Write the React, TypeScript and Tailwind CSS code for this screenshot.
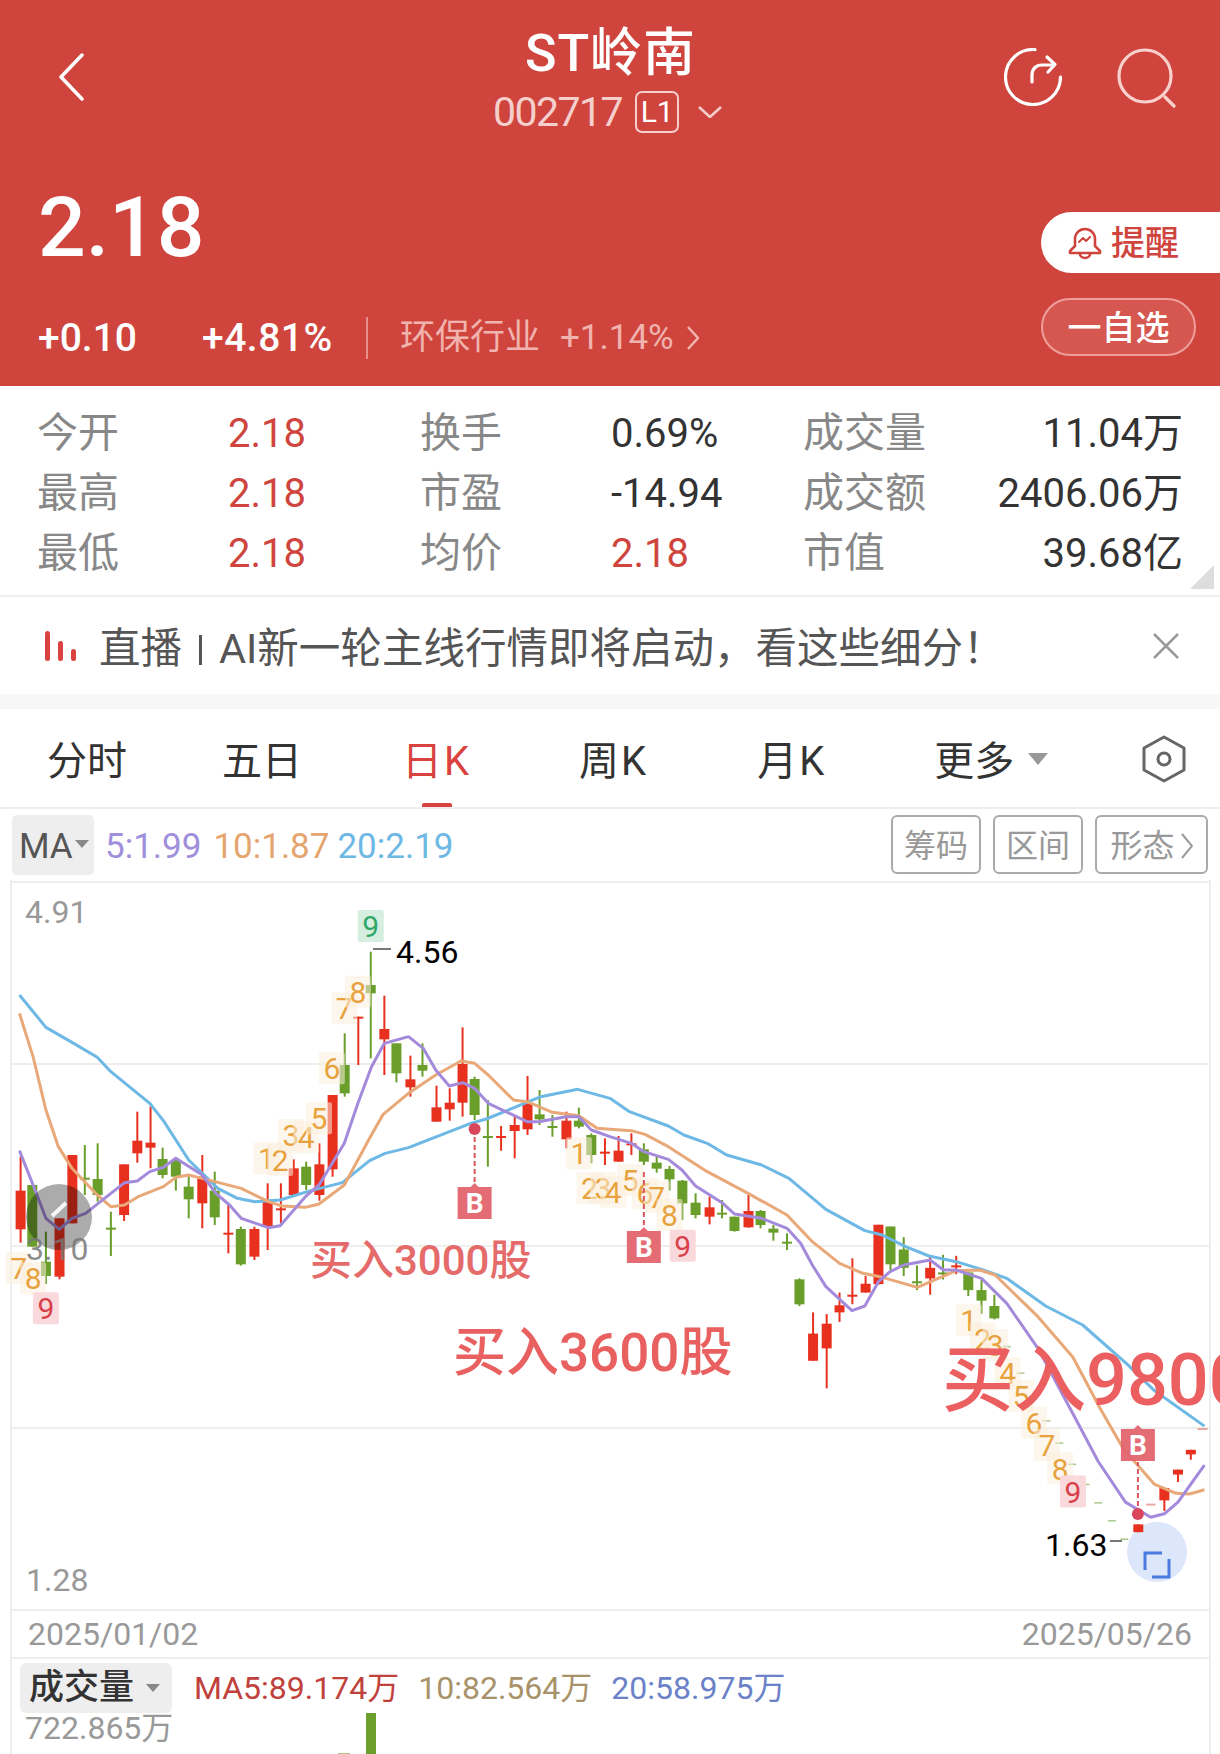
import * as React from "react";

type Candle = [number, number, number, number, number, "r" | "g"];
type Pt = [number, number];

// readings taken from crops of the chart, converted to page pixels below
const lx = (x: number) => x / 2.5705;
const rx = (x: number) => 610 + x / 2.5705;
const y4 = (y: number) => 880 + y / 3;
const y6 = (y: number) => 1200 + y / 2.83;

const leftCandles: Candle[] = [
  [53, 830, 1088, 932, 1048, "r"], [83, 915, 1100, 915, 1100, "g"], [118, 1055, 1212, 1145, 1188, "g"],
  [153, 1015, 1198, 1015, 1190, "r"], [186, 825, 1030, 825, 1030, "r"], [218, 795, 945, 893, 893, "g"],
  [251, 790, 965, 897, 945, "g"], [285, 995, 1128, 1043, 1043, "g"], [319, 853, 1023, 853, 1005, "r"],
  [353, 695, 848, 782, 820, "r"], [387, 680, 865, 788, 803, "r"], [418, 803, 895, 837, 885, "g"],
  [452, 835, 932, 840, 890, "g"], [485, 890, 1015, 920, 958, "g"], [520, 825, 1045, 890, 970, "r"],
  [552, 875, 1035, 932, 1012, "g"], [587, 975, 1120, 1058, 1058, "r"], [619, 1040, 1157, 1047, 1153, "g"],
  [654, 1040, 1140, 1047, 1130, "r"], [688, 910, 1110, 965, 1040, "r"], [722, 910, 1030, 985, 985, "r"],
  [755, 838, 945, 865, 945, "r"], [787, 845, 930, 860, 915, "g"], [821, 790, 962, 853, 945, "r"],
  [855, 645, 890, 645, 868, "r"], [886, 460, 650, 555, 640, "g"], [921, 410, 555, 410, 410, "r"],
  [953, 215, 535, 315, 340, "g"], [988, 347, 585, 447, 478, "r"], [1019, 490, 607, 490, 580, "g"],
  [1055, 527, 650, 598, 622, "r"], [1086, 490, 590, 555, 572, "g"], [1122, 617, 725, 682, 725, "r"],
  [1156, 625, 722, 668, 688, "r"], [1189, 442, 710, 552, 668, "r"], [1220, 590, 720, 597, 705, "g"],
  [1254, 660, 860, 768, 768, "g"], [1288, 738, 812, 768, 768, "r"], [1323, 710, 835, 735, 753, "r"],
  [1356, 588, 765, 672, 748, "r"], [1387, 630, 735, 703, 718, "g"], [1420, 705, 770, 738, 738, "g"],
  [1456, 695, 805, 722, 778, "r"], [1488, 683, 745, 722, 740, "g"], [1520, 760, 850, 765, 825, "g"],
  [1555, 775, 855, 815, 815, "r"],
];

const midCandles: Candle[] = [
  [22, 768, 845, 812, 845, "r"], [55, 760, 825, 790, 790, "r"], [87, 790, 855, 808, 845, "g"],
  [120, 830, 878, 848, 866, "g"], [153, 858, 932, 867, 898, "g"], [186, 900, 1020, 902, 970, "g"],
  [220, 940, 1015, 968, 1005, "g"], [256, 950, 1033, 982, 1010, "r"], [288, 960, 1015, 998, 998, "g"],
  [320, 1010, 1055, 1010, 1053, "g"], [356, 945, 1043, 993, 1042, "r"], [387, 990, 1045, 993, 1035, "g"],
  [420, 1035, 1082, 1046, 1058, "g"], [455, 1060, 1110, 1085, 1085, "g"], [487, 1195, 1278, 1198, 1273, "g"],
];

const lowCandles: Candle[] = [
  [522, 318, 455, 378, 455, "r"], [557, 323, 533, 350, 420, "r"], [590, 262, 345, 298, 318, "r"],
  [623, 165, 295, 268, 268, "r"], [657, 215, 262, 237, 262, "r"], [690, 70, 240, 70, 238, "r"],
  [721, 75, 198, 75, 182, "g"], [755, 105, 215, 140, 192, "g"], [789, 185, 255, 230, 230, "g"],
  [823, 160, 268, 192, 222, "r"], [856, 155, 225, 205, 205, "g"], [890, 158, 210, 185, 185, "r"],
  [921, 205, 272, 205, 255, "g"], [955, 225, 322, 255, 285, "g"], [988, 268, 338, 300, 335, "g"],
  [1358, 918, 940, 918, 940, "r"], [1425, 815, 880, 815, 850, "r"], [1460, 763, 798, 763, 777, "r"],
  [1493, 707, 735, 707, 720, "r"],
];

const candles: Candle[] = [
  ...leftCandles.map((c): Candle => [lx(c[0]), y4(c[1]), y4(c[2]), y4(c[3]), y4(c[4]), c[5]]),
  ...midCandles.map((c): Candle => [rx(c[0]), y4(c[1]), y4(c[2]), y4(c[3]), y4(c[4]), c[5]]),
  ...lowCandles.map((c): Candle => [rx(c[0]), y6(c[1]), y6(c[2]), y6(c[3]), y6(c[4]), c[5]]),
];

const line = (left: Pt[], mid: Pt[], low: Pt[]) =>
  [
    ...left.map(([x, y]) => `${lx(x)},${y4(y)}`),
    ...mid.map(([x, y]) => `${rx(x)},${y4(y)}`),
    ...low.map(([x, y]) => `${rx(x)},${y6(y)}`),
  ].join(" ");

const ma20 = line(
  [[50, 345], [118, 442], [185, 487], [250, 532], [285, 575], [385, 670], [420, 722], [485, 840], [520, 880], [560, 925], [610, 955], [655, 965], [720, 960], [790, 935], [880, 908], [950, 842], [990, 820], [1050, 803], [1210, 730], [1250, 717], [1390, 650], [1485, 628]],
  [[0, 655], [50, 695], [150, 738], [190, 765], [250, 790], [300, 825], [390, 855], [460, 895], [555, 988], [655, 1052], [700, 1065], [760, 1100], [820, 1128], [890, 1145], [955, 1168], [1020, 1195], [1120, 1278], [1215, 1335]],
  [[1330, 465], [1400, 540], [1528, 640]],
);
const ma10 = line(
  [[50, 400], [85, 530], [118, 690], [150, 800], [185, 865], [250, 945], [285, 980], [320, 975], [355, 950], [420, 920], [452, 892], [485, 885], [520, 895], [620, 925], [690, 965], [725, 978], [785, 982], [820, 972], [885, 915], [950, 775], [985, 703], [1050, 640], [1120, 585], [1185, 543], [1220, 550], [1255, 585], [1320, 660], [1355, 665], [1420, 697], [1488, 707], [1535, 745]],
  [[0, 748], [55, 752], [90, 763], [150, 800], [250, 875], [355, 940], [455, 1005], [520, 1085], [590, 1150], [650, 1180], [700, 1192], [790, 1222], [890, 1172], [950, 1170], [990, 1185], [1100, 1310]],
  [[1190, 445], [1260, 590], [1320, 705], [1400, 805], [1455, 830], [1490, 832], [1528, 820]],
);
const ma5 = line(
  [[50, 812], [85, 915], [118, 1015], [152, 1048], [185, 1015], [220, 1000], [320, 908], [353, 903], [385, 875], [420, 862], [452, 835], [520, 885], [555, 940], [590, 975], [620, 1015], [690, 1043], [720, 1037], [785, 950], [820, 915], [885, 790], [920, 670], [955, 560], [988, 490], [1050, 470], [1088, 505], [1120, 570], [1155, 618], [1190, 608], [1220, 625], [1255, 670], [1355, 725], [1385, 725], [1455, 710], [1488, 710], [1520, 750]],
  [[0, 770], [55, 790], [87, 815], [150, 838], [185, 870], [220, 918], [290, 970], [320, 1002], [390, 1015], [455, 1045], [490, 1090], [520, 1155], [555, 1220], [622, 1292], [655, 1278], [690, 1205], [720, 1175], [755, 1155], [823, 1140], [857, 1170], [890, 1170], [955, 1195], [1020, 1270]],
  [[1100, 420], [1190, 605], [1255, 740], [1325, 855], [1390, 898], [1425, 888], [1460, 855], [1528, 750]],
);

// sequence counters: x, y (centre), digit, tone
const counters: [number, number, string, "o" | "r" | "g"][] = [
  [lx(48), y4(1165), "7", "o"], [lx(85), y4(1195), "8", "o"], [lx(118), y4(1285), "9", "r"],
  [lx(685), y4(835), "1", "o"], [lx(720), y4(840), "2", "o"], [lx(748), y4(765), "3", "o"],
  [lx(787), y4(772), "4", "o"], [lx(820), y4(715), "5", "o"], [lx(853), y4(565), "6", "o"],
  [lx(885), y4(385), "7", "o"], [lx(920), y4(335), "8", "o"], [lx(953), y4(138), "9", "g"],
  [lx(1488), y4(820), "1", "o"], [lx(1515), y4(925), "2", "o"], [lx(1550), y4(925), "3", "o"],
  [rx(8), y4(935), "4", "o"], [rx(52), y4(900), "5", "o"], [rx(90), y4(940), "6", "o"],
  [rx(120), y4(950), "7", "o"], [rx(153), y4(1005), "8", "o"], [rx(187), y4(1097), "9", "r"],
  [rx(922), y6(340), "1", "o"], [rx(958), y6(392), "2", "o"], [rx(990), y6(410), "3", "o"],
  [rx(1022), y6(490), "4", "o"], [rx(1057), y6(555), "5", "o"], [rx(1090), y6(630), "6", "o"],
  [rx(1123), y6(693), "7", "o"], [rx(1157), y6(760), "8", "o"], [rx(1190), y6(825), "9", "r"],
];

const ticks: Pt[] = [
  [1020, 415], [1055, 490], [1090, 557], [1122, 625], [1155, 688], [1188, 748], [1222, 805], [1255, 857], [1290, 908], [1322, 960],
];

function BuyMark({ x, boxY, fromY, toY, dot = true }: { x: number; boxY: number; fromY: number; toY: number; dot?: boolean }) {
  return (
    <g>
      <line x1={x} x2={x} y1={fromY} y2={toY} stroke="#D9535F" strokeWidth="2" strokeDasharray="5 3" />
      {dot && <circle cx={x} cy={fromY} r="6" fill="#D9455A" />}
      <path
        d={`M${x - 17} ${boxY + 2}H${x - 4}L${x} ${boxY - 2}L${x + 4} ${boxY + 2}H${x + 17}V${boxY + 34}H${x - 17}Z`}
        fill="#E2646E"
        fillOpacity="0.95"
      />
      <text x={x} y={boxY + 28} textAnchor="middle" fontSize="28" fontWeight="700" fill="#fff">B</text>
    </g>
  );
}

function PriceChart() {
  return (
    <svg viewBox="12 880 1197 729" width="1197" height="729" className="block overflow-visible">
      {[882, 1064, 1246, 1428].map((y) => (
        <line key={y} x1="12" x2="1209" y1={y} y2={y} stroke="#EEEEEE" strokeWidth="2" />
      ))}
      <text x="25" y="923" fontSize="32" fill="#999">4.91</text>
      <circle cx="1157" cy="1552" r="30" fill="#DCE7FB" />
      {ticks.map(([x, y]) => (
        <line key={x} x1={rx(x) - 4} x2={rx(x) + 4} y1={y6(y)} y2={y6(y)} stroke="#A9C98A" strokeWidth="1.5" />
      ))}
      <line x1={rx(1378)} x2={rx(1402)} y1={y6(862)} y2={y6(862)} stroke="#E8A9A4" strokeWidth="2" />
      <line x1={rx(1510)} x2={rx(1536)} y1={y6(648)} y2={y6(648)} stroke="#E8A9A4" strokeWidth="2" />
      {candles.map(([x, top, bottom, bodyTop, bodyBottom, tone], i) => {
        const fill = tone === "r" ? "#E8301F" : "#6A9E2B";
        return (
          <g key={i}>
            <rect x={x - 1} y={top} width="2" height={bottom - top} fill={fill} />
            <rect x={x - 5} y={bodyTop} width="10" height={Math.max(bodyBottom - bodyTop, 2)} fill={fill} />
          </g>
        );
      })}
      <polyline points={ma20} fill="none" stroke="#6DB8E4" strokeWidth="3" strokeLinejoin="round" />
      <polyline points={ma10} fill="none" stroke="#E8A878" strokeWidth="3" strokeLinejoin="round" />
      <polyline points={ma5} fill="none" stroke="#A48ADB" strokeWidth="3" strokeLinejoin="round" />
      {counters.map(([x, y, digit, tone], i) => (
        <g key={i}>
          <rect
            x={x - 13}
            y={y - 16}
            width="26"
            height="32"
            rx="2"
            fill={tone === "o" ? "#FCEEDC" : tone === "r" ? "#F9D9DC" : "#D5EEE0"}
            fillOpacity={tone === "o" ? 0.55 : 1}
          />
          <text
            x={x}
            y={y + 11}
            textAnchor="middle"
            fontSize="30"
            fill={tone === "o" ? "#E8A23D" : tone === "r" ? "#D8404A" : "#2FA866"}
          >
            {digit}
          </text>
        </g>
      ))}
      <BuyMark x={lx(1220)} boxY={1185} fromY={1129} toY={1182} />
      <BuyMark x={rx(87)} boxY={1229} fromY={1172} toY={1226} dot={false} />
      <BuyMark x={rx(1357)} boxY={1427} fromY={1514} toY={1462} />
      <line x1="373" x2="391" y1="949" y2="949" stroke="#777" strokeWidth="2" />
      <text x="396" y="963" fontSize="32" fill="#000">4.56</text>
      <circle cx="59" cy="1217" r="33" fill="#000" fillOpacity="0.33" />
      <path d="M52 1216L66 1203" stroke="#fff" strokeOpacity="0.9" strokeWidth="4" fill="none" />
      <text x="26" y="1260" fontSize="32" fill="#777" fillOpacity="0.85">3.10</text>
      <text x="310" y="1275" fontSize="42" fontWeight="500" fill="#E56B6B">买入3000股</text>
      <text x="453" y="1371" fontSize="53" fontWeight="500" fill="#E8605F">买入3600股</text>
      <text x="942" y="1405" fontSize="72" fontWeight="500" fill="#EC5F60">买入9800</text>
      <text x="26" y="1591" fontSize="32" fill="#999">1.28</text>
      <text x="1045" y="1556" fontSize="32" fill="#000">1.63</text>
      <line x1="1110" x2="1122" y1="1541" y2="1541" stroke="#777" strokeWidth="2" />
      <path d="M1145 1570V1553H1162M1169 1559V1577H1152" fill="none" stroke="#4A7BE0" strokeWidth="3" />
    </svg>
  );
}

function BackIcon() {
  return (
    <svg width="26" height="48" viewBox="0 0 26 48" fill="none" stroke="#fff" strokeWidth="3.5" strokeLinecap="round" strokeLinejoin="round">
      <path d="M24 2L3 24L24 46" />
    </svg>
  );
}

function ShareIcon() {
  return (
    <svg width="58" height="58" viewBox="0 0 58 58" fill="none" stroke="#fff" strokeWidth="3.2" strokeLinecap="round" strokeLinejoin="round">
      <path d="M31 1.6A27.5 27.5 0 1 0 56.5 29" />
      <path d="M28 34V27C28 21 32 17 38 17H50" />
      <path d="M43 9L51 16.5L44 24" />
    </svg>
  );
}

function SearchIcon() {
  return (
    <svg width="60" height="60" viewBox="0 0 60 60" fill="none" stroke="#FAD0CC" strokeWidth="3.2" strokeLinecap="round">
      <circle cx="28" cy="28" r="26" />
      <path d="M48 49L57 58" />
    </svg>
  );
}

function BellIcon() {
  return (
    <svg width="34" height="34" viewBox="0 0 34 34" fill="none" stroke="#CF453E" strokeWidth="2.6" strokeLinejoin="round" strokeLinecap="round">
      <path d="M7 20V13a10 10 0 0 1 20 0v7l5 5v2H2v-2z" />
      <path d="M12 28a5 4 0 0 0 10 0" />
      <path d="M11 16l4-4 3 3 4-4" strokeWidth="2" />
    </svg>
  );
}

const stats = [
  ["今开", "2.18", "换手", "0.69%", "成交量", "11.04万"],
  ["最高", "2.18", "市盈", "-14.94", "成交额", "2406.06万"],
  ["最低", "2.18", "均价", "2.18", "市值", "39.68亿"],
];

export default function App() {
  return (
    <div className="relative w-[1220px] h-[1754px] overflow-hidden bg-white text-[#333] font-[family-name:Roboto,'Noto_Sans_CJK_SC',sans-serif]">
      {/* red quote header */}
      <header className="relative h-[386px] bg-[#CF453E] text-white">
        <div className="flex h-[135px] items-start pt-[53px]">
          <div className="flex-1 pl-[58px]">
            <BackIcon />
          </div>
          <div className="mr-[14px] mt-[-27px] flex flex-col items-center">
            <div className="text-[52px] font-medium leading-[56px] tracking-[1px]">ST岭南</div>
            <div className="mt-[4px] flex items-center pr-[6px] text-[#F5CFCC]">
              <span className="text-[41px] leading-[52px] tracking-[-1.5px]">002717</span>
              <span className="ml-[13px] flex h-[42px] w-[44px] items-center justify-center rounded-[7px] border-2 border-[#F5CFCC] text-[30px] leading-none text-white">
                L1
              </span>
              <svg className="ml-[19px]" width="24" height="12" viewBox="0 0 24 12" fill="none" stroke="#F5CFCC" strokeWidth="2.5">
                <path d="M1 1L12 11L23 1" />
              </svg>
            </div>
          </div>
          <div className="mt-[-5px] flex flex-1 justify-end gap-[55px] pr-[43px]">
            <ShareIcon />
            <SearchIcon />
          </div>
        </div>
        <div className="flex justify-between pl-[38px]">
          <div>
            <div className="mt-[43px] text-[84px] font-medium leading-[100px]">2.18</div>
            <div className="mt-[38px] flex h-[44px] items-center text-[39px] font-medium">
              <span className="w-[164px]">+0.10</span>
              <span className="w-[164px] tracking-[0.5px]">+4.81%</span>
              <span className="h-[42px] w-[2px] bg-[#E88F89]" />
              <span className="ml-[32px] text-[35px] font-normal text-[#F0B3AE]">环保行业</span>
              <span className="ml-[20px] text-[35px] font-normal text-[#F0B3AE]">+1.14%</span>
              <svg className="ml-[13px]" width="12" height="24" viewBox="0 0 12 24" fill="none" stroke="#F0B3AE" strokeWidth="2.5">
                <path d="M1 1L11 12L1 23" />
              </svg>
            </div>
          </div>
          <div className="mt-[77px] flex w-[179px] flex-col items-start">
            <div className="flex h-[61px] w-[179px] items-center rounded-l-[31px] bg-white pl-[27px] text-[34px] font-medium text-[#CF453E]">
              <BellIcon />
              <span className="ml-[9px] mt-[2px]">提醒</span>
            </div>
            <div className="mt-[25px] flex h-[58px] w-[155px] items-center justify-center rounded-[29px] border-2 border-[#EE9F9A] bg-[#D6574F] pt-[3px] text-[34px] font-medium">
              一自选
            </div>
          </div>
        </div>
      </header>

      {/* quote table */}
      <section className="relative h-[211px] border-b-2 border-[#EEEEEE] pt-[18px]">
        {stats.map((row) => (
          <div key={row[0]} className="flex h-[60px] items-center pl-[37px] pr-[37px] text-[40px]">
            <span className="w-[191px] text-[41px] text-[#888]">{row[0]}</span>
            <span className="w-[192px] text-[#CF453E]">{row[1]}</span>
            <span className="w-[191px] text-[41px] text-[#888]">{row[2]}</span>
            <span className={row[3] === "2.18" ? "w-[192px] text-[#CF453E]" : "w-[192px]"}>{row[3]}</span>
            <span className="text-[41px] text-[#888]">{row[4]}</span>
            <span className="ml-auto">{row[5]}</span>
          </div>
        ))}
        <div className="absolute bottom-[6px] right-[6px] h-0 w-0 border-b-[24px] border-l-[24px] border-b-[#DDDDDD] border-l-transparent" />
      </section>

      {/* live banner */}
      <section className="flex h-[97px] items-center pl-[45px] pr-[41px]">
        <svg width="32" height="30" viewBox="0 0 32 30" fill="#D9423E">
          <rect x="0" y="0" width="5" height="30" rx="2.5" />
          <rect x="13" y="10" width="5" height="20" rx="2.5" />
          <rect x="26" y="18" width="5" height="12" rx="2.5" />
        </svg>
        <div className="ml-[22px] mt-[8px] flex items-center whitespace-nowrap text-[41.5px] text-[#555]">
          直播
          <span className="mx-[17px] h-[30px] w-[3px] bg-[#555]" />
          AI新一轮主线行情即将启动，看这些细分！
        </div>
        <svg className="ml-auto" width="26" height="26" viewBox="0 0 26 26" stroke="#999" strokeWidth="2.5">
          <path d="M1 1L25 25M25 1L1 25" />
        </svg>
      </section>
      <div className="h-[15px] bg-[#F7F7F7]" />

      {/* period tabs */}
      <nav className="relative flex h-[100px] items-center border-b-2 border-[#EEEEEE] pt-[8px] text-[40px] text-[#333]">
        <span className="ml-[47px]">分时</span>
        <span className="ml-[95px]">五日</span>
        <span className="ml-[100px] tracking-[2px] text-[#D9423E]">日K</span>
        <span className="ml-[108px] tracking-[2px]">周K</span>
        <span className="ml-[109px] tracking-[2px]">月K</span>
        <span className="ml-[108px]">更多</span>
        <span className="ml-[14px] mt-[-6px] h-0 w-0 border-x-[10px] border-t-[12px] border-x-transparent border-t-[#999]" />
        <svg className="ml-[94px] mt-[-6px]" width="44" height="48" viewBox="0 0 44 48" fill="none" stroke="#666" strokeWidth="3">
          <path d="M22 2L42 13V35L22 46L2 35V13Z" strokeLinejoin="round" />
          <circle cx="22" cy="24" r="6" />
        </svg>
        <span className="absolute bottom-0 left-[422px] h-[4px] w-[30px] rounded-t-[2px] bg-[#D9423E]" />
      </nav>

      {/* moving average legend */}
      <section className="flex h-[71px] items-center pl-[12px] pr-[12px] text-[35px]">
        <div className="flex h-[60px] w-[82px] items-center rounded-[5px] bg-[#EEEEEE] pl-[7px] pt-[5px] text-[#555]">
          MA
          <span className="ml-[2px] mt-[-6px] h-0 w-0 border-x-[7px] border-t-[8px] border-x-transparent border-t-[#888]" />
        </div>
        <span className="ml-[11px] mt-[5px] text-[#A08FDB]">5:1.99</span>
        <span className="ml-[12px] mt-[5px] text-[#E5A56F]">10:1.87</span>
        <span className="ml-[8px] mt-[5px] text-[#6DB8E4]">20:2.19</span>
        <div className="ml-auto flex gap-[12px] text-[32px] text-[#999]">
          <span className="flex h-[59px] w-[90px] items-center justify-center rounded-[6px] border-2 border-[#AAA] pt-[3px]">筹码</span>
          <span className="flex h-[59px] w-[90px] items-center justify-center rounded-[6px] border-2 border-[#AAA] pt-[3px]">区间</span>
          <span className="flex h-[59px] w-[113px] items-center justify-center gap-[6px] rounded-[6px] border-2 border-[#AAA] pt-[3px]">
            形态
            <svg width="12" height="26" viewBox="0 0 12 26" fill="none" stroke="#999" strokeWidth="2">
              <path d="M1 1L11 13L1 25" />
            </svg>
          </span>
        </div>
      </section>

      {/* chart + volume */}
      <section className="ml-[10px] h-[874px] w-[1201px] border-x-2 border-[#EEEEEE]">
        <PriceChart />
        <div className="flex h-[50px] items-center justify-between border-y-2 border-[#EEEEEE] pl-[16px] pr-[17px] text-[32px] text-[#999]">
          <span>2025/01/02</span>
          <span>2025/05/26</span>
        </div>
        <div className="flex pl-[8px] pt-[4px]">
          <div className="flex h-[50px] w-[152px] items-center rounded-[6px] bg-[#EEEEEE] pl-[9px] text-[35px] font-medium text-[#333]">
            成交量
            <span className="ml-[12px] h-0 w-0 border-x-[7px] border-t-[8px] border-x-transparent border-t-[#888]" />
          </div>
          <div className="ml-[22px] flex h-[50px] items-center gap-[19px] text-[32px]">
            <span className="text-[#C0413C]">MA5:89.174万</span>
            <span className="text-[#A8926A]">10:82.564万</span>
            <span className="text-[#6B82C8]">20:58.975万</span>
          </div>
        </div>
        <div className="relative pl-[13px] text-[32px] leading-[30px] text-[#999]">
          722.865万
          <span className="absolute left-[354px] top-0 h-[50px] w-[10px] bg-[#6B9F2E]" />
          <span className="absolute left-[326px] top-[40px] h-[2px] w-[12px] bg-[#A9C98A]" />
        </div>
      </section>
    </div>
  );
}
